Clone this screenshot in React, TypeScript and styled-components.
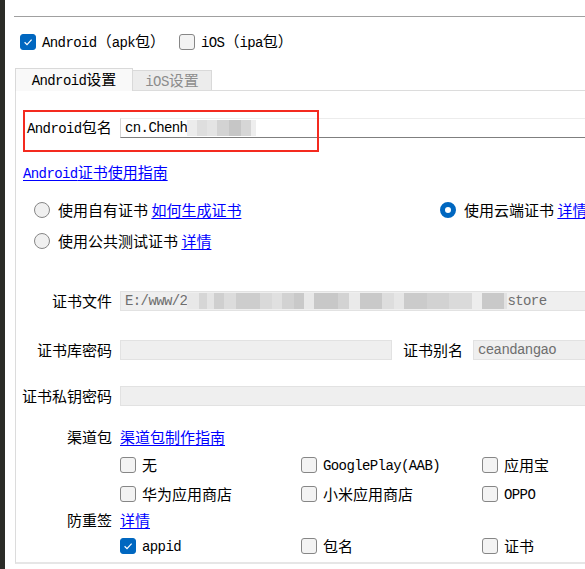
import React from 'react';
import styled, { createGlobalStyle } from 'styled-components';

const GlobalStyle = createGlobalStyle`
  html, body {
    margin: 0;
    padding: 0;
    background: #ffffff;
    overflow: hidden;
  }
  body {
    font-family: "Noto Sans CJK SC", "Liberation Sans", sans-serif;
    font-size: 15px;
    line-height: 20px;
    color: #000000;
  }
`;

const Page = styled.div`
  display: flex;
  width: 585px;
  height: 569px;
  overflow: hidden;
`;

const EdgeBar = styled.div`
  flex: 0 0 5px;
  background: #2b2c27;
`;

const Main = styled.div`
  flex: 0 0 720px;
  padding-left: 9px;
  display: flex;
  flex-direction: column;
`;

const TopRule = styled.div`
  margin-top: 16px;
  height: 1px;
  background: #a0a0a0;
`;

const En = styled.span`
  font-family: "Liberation Mono", monospace;
  font-size: 14px;
  letter-spacing: -0.6px;
`;

const TypeRow = styled.div`
  margin-top: 15px;
  height: 20px;
  padding-left: 6px;
  display: flex;
  align-items: center;
`;

const Choice = styled.label<{ $w?: number }>`
  display: inline-flex;
  align-items: center;
  gap: 6px;
  height: 20px;
  white-space: nowrap;
  ${(p) => (p.$w ? `flex: 0 0 ${p.$w}px;` : '')}
`;

const Box = styled.span<{ $on?: boolean }>`
  flex: 0 0 16px;
  width: 16px;
  height: 16px;
  box-sizing: border-box;
  border-radius: 3px;
  border: 1px solid ${(p) => (p.$on ? '#0067c0' : '#868686')};
  background: ${(p) => (p.$on ? '#0067c0' : '#f3f3f3')};
  display: flex;
  align-items: center;
  justify-content: center;
`;

const Round = styled.span<{ $on?: boolean }>`
  flex: 0 0 16px;
  width: 16px;
  height: 16px;
  box-sizing: border-box;
  border-radius: 50%;
  border: ${(p) => (p.$on ? '5px solid #0067c0' : '1px solid #868686')};
  background: ${(p) => (p.$on ? '#ffffff' : '#f0f0f0')};
`;

const Tabs = styled.div`
  margin-top: 16px;
  margin-left: 1px;
  display: flex;
  align-items: flex-end;
`;

const Tab = styled.div<{ $active?: boolean }>`
  box-sizing: border-box;
  width: ${(p) => (p.$active ? 118 : 79)}px;
  height: ${(p) => (p.$active ? 23 : 20)}px;
  margin-bottom: ${(p) => (p.$active ? -1 : 0)}px;
  border: 1px solid #d9d9d9;
  border-bottom: none;
  ${(p) => (p.$active ? '' : 'border-left: none;')}
  background: ${(p) => (p.$active ? '#f9f9f9' : '#ececec')};
  color: ${(p) => (p.$active ? '#000000' : '#8c8c8c')};
  position: relative;
  z-index: ${(p) => (p.$active ? 1 : 0)};
  display: flex;
  align-items: center;
  justify-content: center;
`;

const Panel = styled.div`
  margin-left: 1px;
  border-top: 1px solid #dcdcdc;
  border-left: 1px solid #dcdcdc;
  border-bottom: 2px solid #e6e6e6;
  padding-bottom: 6px;
  display: flex;
  flex-direction: column;
`;

const PkgRow = styled.div`
  position: relative;
  margin-top: 27px;
  height: 20px;
  display: flex;
  align-items: center;
`;

const PkgLabel = styled.span`
  flex: 0 0 93px;
  padding-left: 11px;
  white-space: nowrap;
`;

const PkgInput = styled.div`
  flex: 1;
  height: 20px;
  box-sizing: border-box;
  border-top: 1px solid #ececec;
  border-left: 1px solid #d4d4d4;
  border-bottom: 1px solid #7f7f7f;
  padding-left: 4px;
  display: flex;
  align-items: center;
  white-space: nowrap;
  overflow: hidden;
`;

const RedFrame = styled.div`
  position: absolute;
  left: 7px;
  top: -8px;
  width: 296px;
  height: 42px;
  box-sizing: border-box;
  border: 2px solid #f42a1f;
  pointer-events: none;
`;

const Link = styled.a`
  color: #0000ff;
  text-decoration: underline;
  text-underline-offset: 2px;
  cursor: pointer;
  white-space: nowrap;
`;

const GuideRow = styled.div`
  margin-top: 24px;
  padding-left: 7px;
  height: 20px;
`;

const RadioRow = styled.div<{ $mt: number }>`
  margin-top: ${(p) => p.$mt}px;
  padding-left: 18px;
  height: 20px;
  display: flex;
  align-items: center;
`;

const RadioItem = styled.label<{ $w?: number }>`
  display: inline-flex;
  align-items: center;
  gap: 8px;
  white-space: nowrap;
  ${(p) => (p.$w ? `flex: 0 0 ${p.$w}px;` : '')}
`;

const FieldRow = styled.div<{ $mt: number }>`
  margin-top: ${(p) => p.$mt}px;
  height: 20px;
  display: grid;
  grid-template-columns: 96px 1fr;
  column-gap: 8px;
  align-items: center;
`;

const FieldLabel = styled.span`
  text-align: right;
  white-space: nowrap;
`;

const FieldBody = styled.div`
  display: flex;
  align-items: center;
  height: 20px;
  white-space: nowrap;
`;

const TextBox = styled.div<{ $w?: number }>`
  ${(p) => (p.$w ? `flex: 0 0 ${p.$w}px;` : 'flex: 1;')}
  height: 20px;
  box-sizing: border-box;
  background: #efefef;
  border: 1px solid #e2e2e2;
  color: #6e6e6e;
  padding-left: 4px;
  display: flex;
  align-items: center;
  overflow: hidden;
  white-space: nowrap;
`;

const InlineLabel = styled.span`
  margin: 0 10px 0 11px;
  white-space: nowrap;
`;

const Smudge = styled.span`
  display: inline-flex;
  height: 16px;
`;

const Pixel = styled.span<{ $w: number; $c: string }>`
  width: ${(p) => p.$w}px;
  background: ${(p) => p.$c};
`;

const OptionGrid = styled.div<{ $mt: number }>`
  margin-top: ${(p) => p.$mt}px;
  margin-left: 104px;
  height: 20px;
  display: grid;
  grid-template-columns: repeat(3, 181px);
  align-items: center;
`;

const pkgBlur: [number, string][] = [
  [10, '#ececec'],
  [10, '#dedede'],
  [10, '#e4e4e4'],
  [12, '#d3d3d3'],
  [12, '#c6c6c6'],
  [10, '#d6d6d6'],
  [5, '#eeeeee'],
];

const fileBlur: [number, string][] = [
  [12, '#e8e8e8'], [8, '#d6d6d6'], [7, '#e4e4e4'], [10, '#cfcfcf'],
  [12, '#dcdcdc'], [24, '#cdcdcd'], [12, '#d9d9d9'], [10, '#e0e0e0'],
  [12, '#d2d2d2'], [10, '#c9c9c9'], [10, '#e8e8e8'], [24, '#c8c8c8'],
  [11, '#d3d3d3'], [11, '#eaeaea'], [22, '#c9c9c9'], [12, '#dddddd'],
  [10, '#e6e6e6'], [23, '#cbcbcb'], [22, '#d2d2d2'], [23, '#dadada'],
  [10, '#ededed'], [22, '#c9c9c9'], [3, '#e2e2e2'],
];

const Blur: React.FC<{ cells: [number, string][] }> = ({ cells }) => (
  <Smudge>
    {cells.map(([w, c], i) => (
      <Pixel key={i} $w={w} $c={c} />
    ))}
  </Smudge>
);

const Check: React.FC<{ on?: boolean }> = ({ on }) => (
  <Box $on={on}>
    {on && (
      <svg width="12" height="12" viewBox="0 0 12 12">
        <path d="M2.6 6.3 L5 8.6 L9.6 3.6" fill="none" stroke="#ffffff" strokeWidth="1.2" />
      </svg>
    )}
  </Box>
);

const Option: React.FC<{ on?: boolean; children: React.ReactNode }> = ({ on, children }) => (
  <Choice>
    <Check on={on} />
    <span>{children}</span>
  </Choice>
);

export default function App() {
  return (
    <>
      <GlobalStyle />
      <Page>
        <EdgeBar />
        <Main>
          <TopRule />
          <TypeRow>
            <Choice $w={159}>
              <Check on />
              <span>
                <En>Android</En>（<En>apk</En>包）
              </span>
            </Choice>
            <Choice>
              <Check />
              <span>
                <En>iOS</En>（<En>ipa</En>包）
              </span>
            </Choice>
          </TypeRow>

          <Tabs>
            <Tab $active>
              <span>
                <En>Android</En>设置
              </span>
            </Tab>
            <Tab>
              <span>
                <En>iOS</En>设置
              </span>
            </Tab>
          </Tabs>

          <Panel>
            <PkgRow>
              <PkgLabel>
                <En>Android</En>包名
              </PkgLabel>
              <PkgInput>
                <En>cn.Chenh</En>
                <Blur cells={pkgBlur} />
              </PkgInput>
              <RedFrame />
            </PkgRow>

            <GuideRow>
              <Link>
                <En>Android</En>证书使用指南
              </Link>
            </GuideRow>

            <RadioRow $mt={18}>
              <RadioItem $w={406}>
                <Round />
                <span>
                  使用自有证书 <Link>如何生成证书</Link>
                </span>
              </RadioItem>
              <RadioItem>
                <Round $on />
                <span>
                  使用云端证书 <Link>详情</Link>
                </span>
              </RadioItem>
            </RadioRow>
            <RadioRow $mt={11}>
              <RadioItem>
                <Round />
                <span>
                  使用公共测试证书 <Link>详情</Link>
                </span>
              </RadioItem>
            </RadioRow>

            <FieldRow $mt={40}>
              <FieldLabel>证书文件</FieldLabel>
              <FieldBody>
                <TextBox>
                  <En>E:/www/2</En>
                  <Blur cells={fileBlur} />
                  <En>store</En>
                </TextBox>
              </FieldBody>
            </FieldRow>
            <FieldRow $mt={29}>
              <FieldLabel>证书库密码</FieldLabel>
              <FieldBody>
                <TextBox $w={272} />
                <InlineLabel>证书别名</InlineLabel>
                <TextBox>
                  <En>ceandangao</En>
                </TextBox>
              </FieldBody>
            </FieldRow>
            <FieldRow $mt={26}>
              <FieldLabel>证书私钥密码</FieldLabel>
              <FieldBody>
                <TextBox />
              </FieldBody>
            </FieldRow>

            <FieldRow $mt={21}>
              <FieldLabel>渠道包</FieldLabel>
              <FieldBody>
                <Link>渠道包制作指南</Link>
              </FieldBody>
            </FieldRow>
            <OptionGrid $mt={8}>
              <Option>无</Option>
              <Option>
                <En>GooglePlay(AAB)</En>
              </Option>
              <Option>应用宝</Option>
            </OptionGrid>
            <OptionGrid $mt={9}>
              <Option>华为应用商店</Option>
              <Option>小米应用商店</Option>
              <Option>
                <En>OPPO</En>
              </Option>
            </OptionGrid>

            <FieldRow $mt={6}>
              <FieldLabel>防重签</FieldLabel>
              <FieldBody>
                <Link>详情</Link>
              </FieldBody>
            </FieldRow>
            <OptionGrid $mt={6}>
              <Option on>
                <En>appid</En>
              </Option>
              <Option>包名</Option>
              <Option>证书</Option>
            </OptionGrid>
          </Panel>
        </Main>
      </Page>
    </>
  );
}
